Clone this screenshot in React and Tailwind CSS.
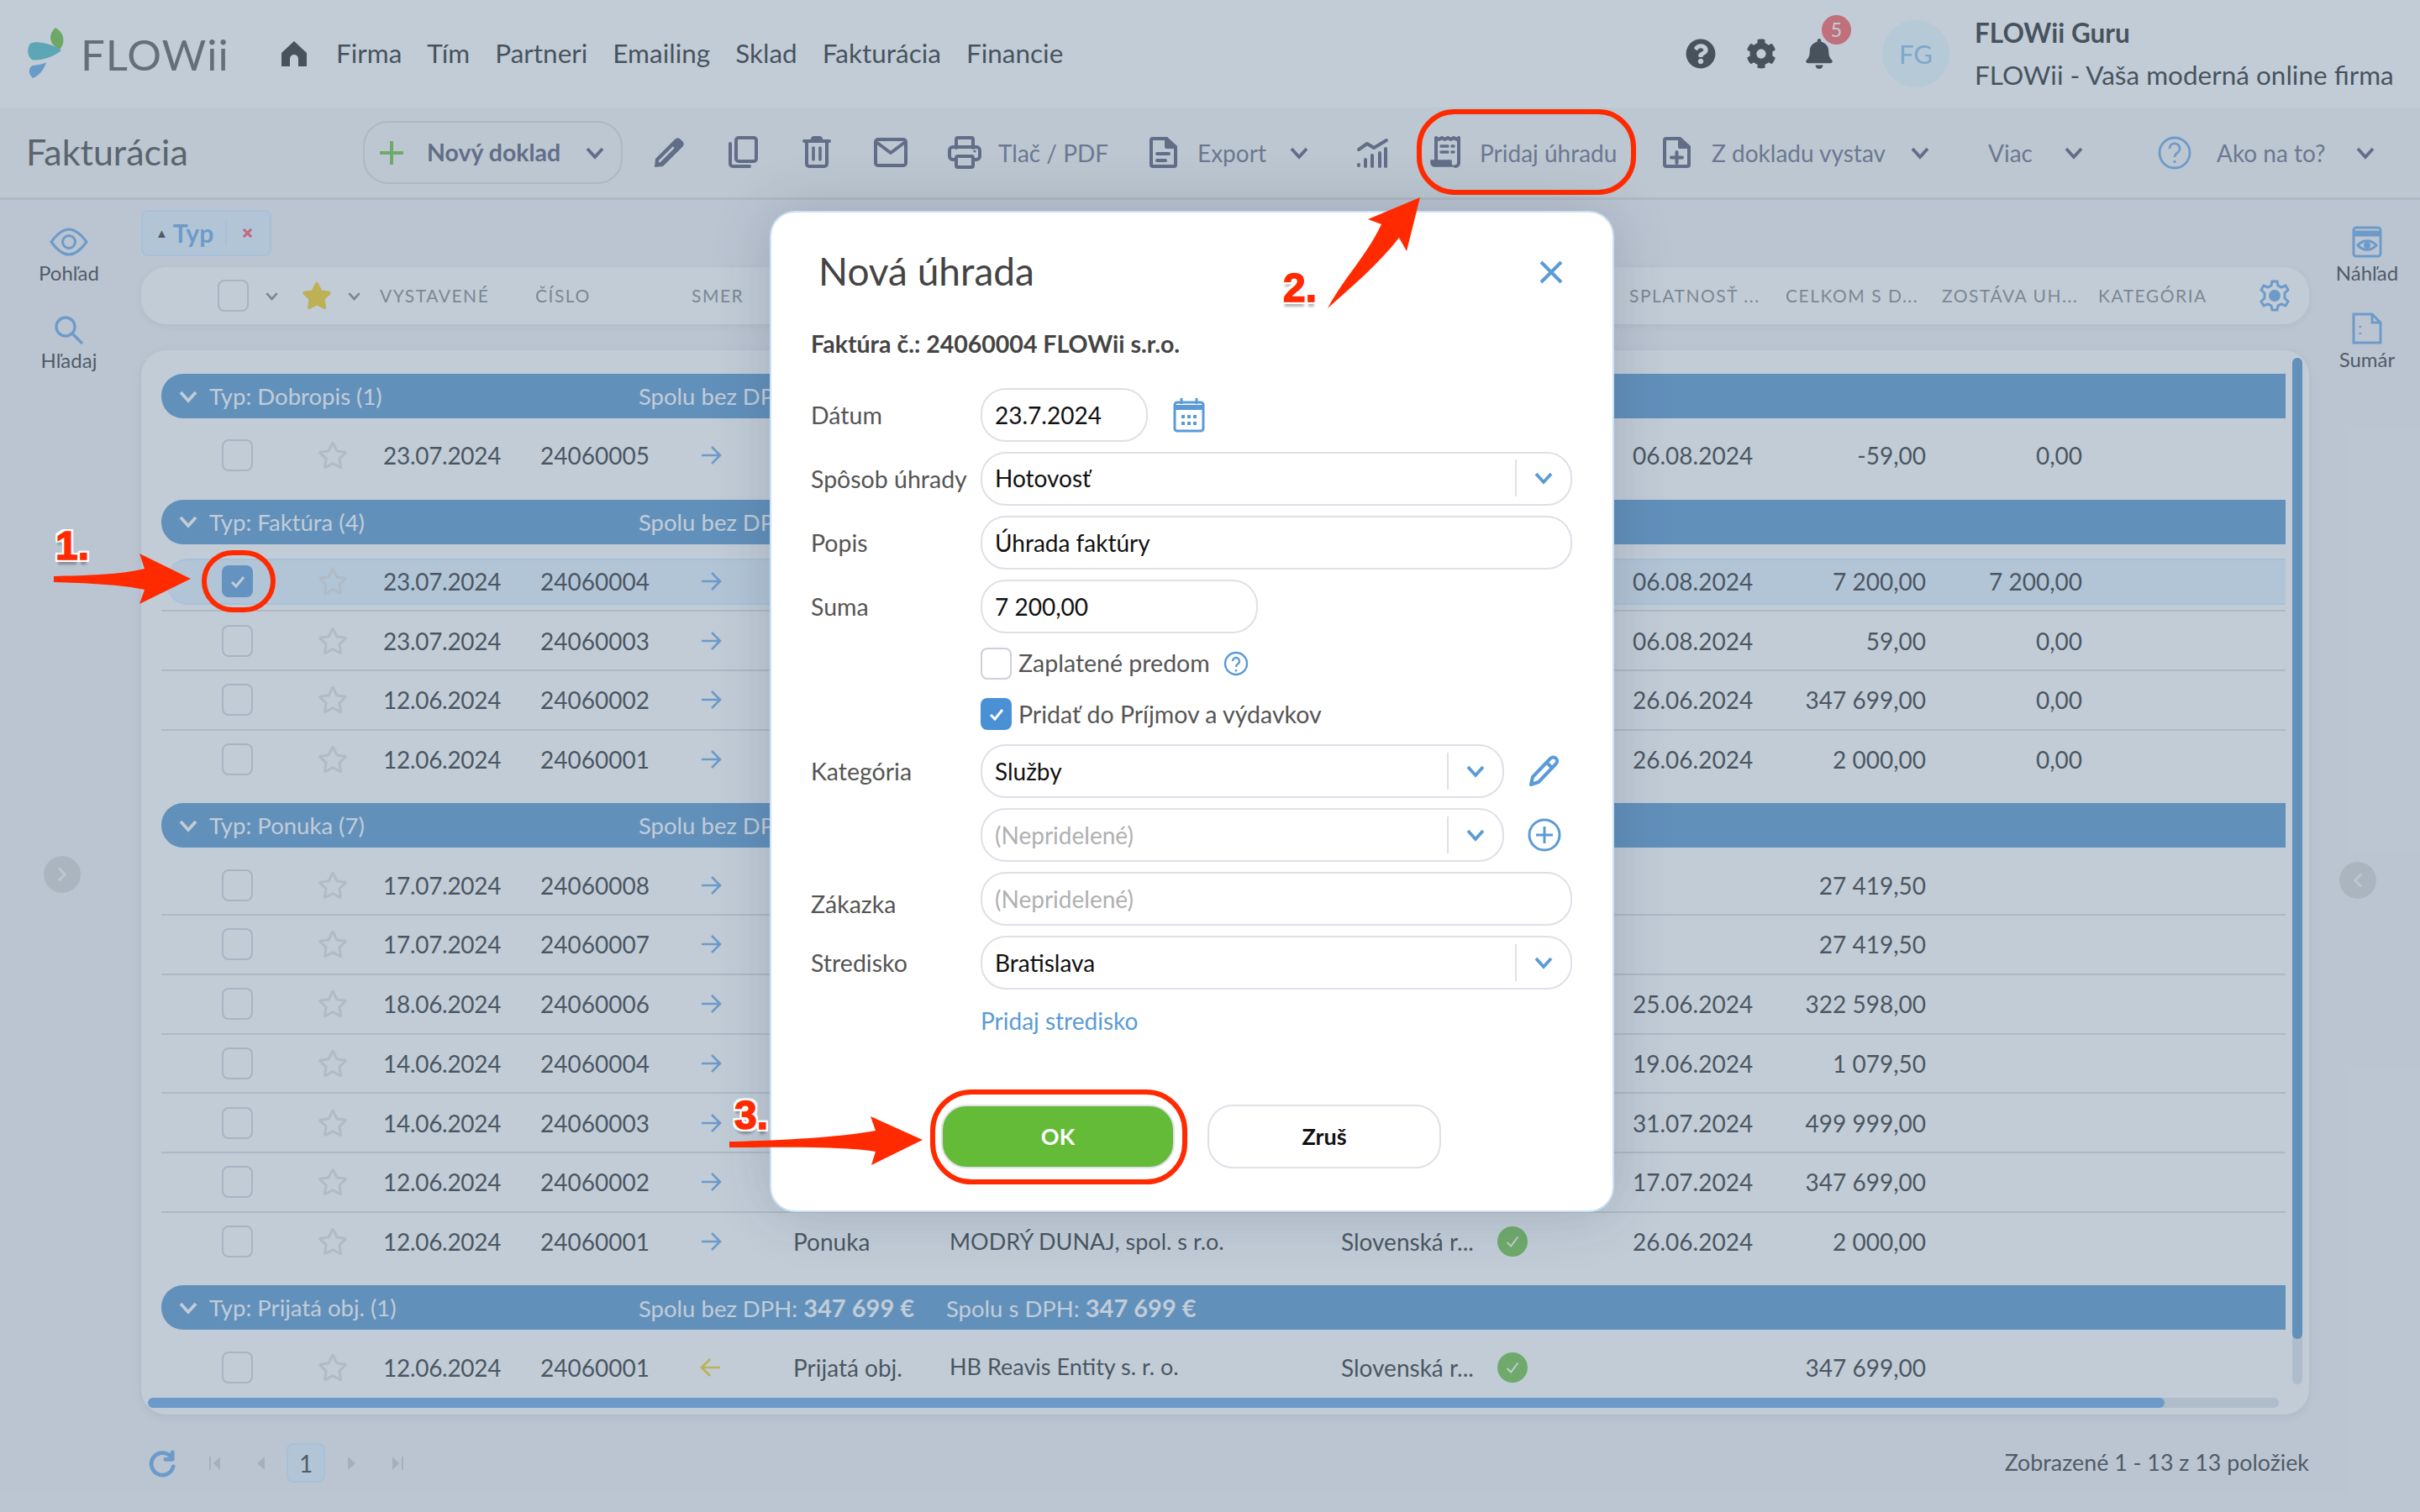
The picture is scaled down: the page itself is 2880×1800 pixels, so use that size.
import { Fragment } from "react";
import { FaQuestionCircle, FaCog, FaBell, FaStar, FaRegStar } from "react-icons/fa";

const groups = [
    {
        title: "Typ: Dobropis (1)",
        rows: [{ date: "23.07.2024", num: "24060005", due: "06.08.2024", total: "-59,00", left: "0,00" }],
    },
    {
        title: "Typ: Faktúra (4)",
        rows: [
            { date: "23.07.2024", num: "24060004", due: "06.08.2024", total: "7 200,00", left: "7 200,00", selected: true },
            { date: "23.07.2024", num: "24060003", due: "06.08.2024", total: "59,00", left: "0,00" },
            { date: "12.06.2024", num: "24060002", due: "26.06.2024", total: "347 699,00", left: "0,00" },
            { date: "12.06.2024", num: "24060001", due: "26.06.2024", total: "2 000,00", left: "0,00" },
        ],
    },
    {
        title: "Typ: Ponuka (7)",
        rows: [
            { date: "17.07.2024", num: "24060008", total: "27 419,50" },
            { date: "17.07.2024", num: "24060007", total: "27 419,50" },
            { date: "18.06.2024", num: "24060006", due: "25.06.2024", total: "322 598,00" },
            { date: "14.06.2024", num: "24060004", due: "19.06.2024", total: "1 079,50" },
            { date: "14.06.2024", num: "24060003", due: "31.07.2024", total: "499 999,00" },
            { date: "12.06.2024", num: "24060002", due: "17.07.2024", total: "347 699,00" },
            { date: "12.06.2024", num: "24060001", due: "26.06.2024", total: "2 000,00", type: "Ponuka", company: "MODRÝ DUNAJ, spol. s r.o.", state: "Slovenská r...", ok: true },
        ],
    },
    {
        title: "Typ: Prijatá obj. (1)",
        totals: true,
        rows: [
            { date: "12.06.2024", num: "24060001", total: "347 699,00", type: "Prijatá obj.", company: "HB Reavis Entity s. r. o.", state: "Slovenská r...", ok: true, incoming: true },
        ],
    },
];

function Chevron({ className }) {
    return (
        <svg viewBox="0 0 24 16" fill="none" stroke="currentColor" strokeWidth="3.8" className={className}>
            <path d="M3 3l9 10 9-10" />
        </svg>
    );
}

function ToolIcon({ children, className = "ml-0" }) {
    return (
        <svg viewBox="0 0 40 40" fill="none" stroke="currentColor" strokeWidth="4" strokeLinejoin="round" strokeLinecap="round" className={`w-[40px] h-[40px] shrink-0 text-[#454564] ${className}`}>
            {children}
        </svg>
    );
}

function ToolChevron({ className }) {
    return <Chevron className={`w-[24px] h-[16px] shrink-0 text-[#454564] ${className}`} />;
}

function Logo() {
    return (
        <svg viewBox="0 0 50 66" className="w-[50px] h-[66px] shrink-0">
            <path d="M36 2C27 10 28 22 41 28 48 20 47 8 36 2z" fill="#5ab825" />
            <path d="M6 21C12 17 30 20 43 29 32 38 16 42 8 40 2 36 2 26 6 21z" fill="#39b4be" />
            <path d="M25 43C23 52 15 60 9 62 3 56 4 49 9 47 15 46 21 46 25 43z" fill="#549fe1" />
        </svg>
    );
}

function Checkbox({ checked }) {
    if (checked) {
        return (
            <div className="w-[37px] h-[38px] rounded-[8px] bg-[#4a90d4] flex items-center justify-center shrink-0">
                <svg viewBox="0 0 24 24" fill="none" stroke="white" strokeWidth="3" className="w-[24px] h-[24px]">
                    <path d="M5 13l5 5 9-11" />
                </svg>
            </div>
        );
    }
    return <div className="w-[37px] h-[38px] rounded-[8px] border-2 border-[#cdd0da] bg-white shrink-0" />;
}

function RowArrow({ incoming }) {
    return (
        <svg viewBox="0 0 26 26" fill="none" stroke={incoming ? "#f7c800" : "#5a9fe3"} strokeWidth="2.6" className={`w-[26px] h-[26px] ${incoming ? "rotate-180" : ""}`}>
            <path d="M2 13h21M14 3l10 10-10 10" />
        </svg>
    );
}

function Row({ row, last }) {
    return (
        <div className={`h-[70.7px] flex items-center border-b-2 ${last ? "border-transparent" : "border-[#dad7dd]"}`}>
            <div
                className={`w-full ml-[6px] h-[55px] pl-[66px] rounded-l-[26px] grid grid-cols-[114px_78px_187px_190px_111px_186px_466px_186px_161px_157px_192px_186px_1fr] items-center text-[28px] text-[#161616] border-y-2 ${
                    row.selected ? "bg-[#e1f1ff] border-[#cde7ff]" : "border-transparent"
                }`}
            >
                <Checkbox checked={row.selected} />
                <FaRegStar className="w-[36px] h-[34px] text-[#dddddd]" />
                <div className="tracking-[-0.3px]">{row.date}</div>
                <div>{row.num}</div>
                <RowArrow incoming={row.incoming} />
                <div>{row.type}</div>
                <div className="text-[27px]">{row.company}</div>
                <div>{row.state}</div>
                <div>
                    {row.ok && (
                        <div className="w-[36px] h-[36px] rounded-full bg-[#5ebc2d] flex items-center justify-center">
                            <svg viewBox="0 0 24 24" fill="none" stroke="white" strokeWidth="2.2" className="w-[22px] h-[22px]">
                                <path d="M5 13l5 5 9-12" />
                            </svg>
                        </div>
                    )}
                </div>
                <div>{row.due}</div>
                <div className="text-right">{row.total}</div>
                <div className="text-right">{row.left}</div>
            </div>
        </div>
    );
}

function Group({ group }) {
    return (
        <div className="mb-[16px]">
            <div className="h-[53px] rounded-l-[26px] bg-[#4389c8] text-white text-[27.5px] flex items-center pl-[20px]">
                <Chevron className="w-[24px] h-[16px]" />
                <div className="ml-[13px] w-[511px]">{group.title}</div>
                <div className="w-[366px] whitespace-nowrap">
                    Spolu bez DPH{group.totals ? ": " : ""}
                    {group.totals && <b className="text-[29px]">347 699 €</b>}
                </div>
                {group.totals && (
                    <div>
                        Spolu s DPH: <b className="text-[29px]">347 699 €</b>
                    </div>
                )}
            </div>
            <div className="mt-[10px]">
                {group.rows.map((row, i) => (
                    <Row key={i} row={row} last={i === group.rows.length - 1} />
                ))}
            </div>
        </div>
    );
}

function Field({ label, children, labelClass = "" }) {
    return (
        <div className="flex items-center h-[64px]">
            <div className={`w-[202px] shrink-0 text-[28.5px] text-[#555555] ${labelClass}`}>{label}</div>
            {children}
        </div>
    );
}

function Box({ children, className = "", arrow, muted }) {
    return (
        <div className={`h-[64px] rounded-[30px] border-2 border-[#dfe0e8] bg-white flex items-center pl-[15px] text-[28px] ${muted ? "text-[#b0b0b0]" : "text-[#111111]"} ${className}`}>
            <div className="flex-1">{children}</div>
            {arrow && (
                <Fragment>
                    <div className="w-[2px] h-[44px] bg-[#dfe0e8]" />
                    <Chevron className="w-[24px] h-[16px] mx-[20px] text-[#5b9bd5]" />
                </Fragment>
            )}
        </div>
    );
}

function Modal() {
    return (
        <div className="absolute left-[916px] top-[251px] w-[1005px] h-[1192px] rounded-[30px] bg-white border-2 border-[#c8e0f5] shadow-[0_0_70px_rgba(40,50,70,0.2)] pl-[47px] pt-[37px] [font-family:Lato,sans-serif]">
            <div className="flex items-center justify-between h-[64px] pl-[9px] pr-[58px]">
                <div className="text-[46px] text-[#444444]">Nová úhrada</div>
                <svg viewBox="0 0 30 30" fill="none" stroke="#5b9bd5" strokeWidth="4" className="w-[30px] h-[30px] mt-[3px]">
                    <path d="M3 3l24 24M27 3L3 27" />
                </svg>
            </div>
            <div className="h-[40px] mt-[35px] flex items-center text-[28.5px] font-bold text-[#444444]">Faktúra č.: 24060004 FLOWii s.r.o.</div>

            <div className="mt-[33px] w-[906px] flex flex-col gap-[12px]">
                <Field label="Dátum">
                    <Box className="w-[199px]">23.7.2024</Box>
                    <svg viewBox="0 0 38 42" className="w-[38px] h-[42px] ml-[30px]" fill="none" stroke="#5b9bd5" strokeWidth="3">
                        <rect x="2" y="6" width="34" height="34" rx="3" />
                        <path d="M2 12h34" strokeWidth="6" />
                        <path d="M10 1v7M28 1v7" />
                        <path d="M10 23h4M17 23h4M24 23h4M10 31h4M17 31h4M24 31h4" strokeWidth="4" />
                    </svg>
                </Field>
                <Field label="Spôsob úhrady">
                    <Box className="flex-1 pb-[3px]" arrow>Hotovosť</Box>
                </Field>
                <Field label="Popis">
                    <Box className="flex-1">Úhrada faktúry</Box>
                </Field>
                <Field label="Suma">
                    <Box className="w-[330px]">7 200,00</Box>
                </Field>
            </div>

            <div className="flex items-center h-[37px] mt-[17px] ml-[202px] text-[28.5px] text-[#555555]">
                <Checkbox />
                <div className="ml-[8px]">Zaplatené predom</div>
                <svg viewBox="0 0 30 30" fill="none" stroke="#5b9bd5" strokeWidth="2.4" className="w-[30px] h-[30px] ml-[16px]">
                    <circle cx="15" cy="15" r="13" />
                    <path d="M11 12a4 4 0 1 1 6 3.5c-1.5 1-2 1.5-2 3.5M15 22v2.5" />
                </svg>
            </div>
            <div className="flex items-center h-[38px] mt-[23px] ml-[202px] text-[28.5px] text-[#555555]">
                <Checkbox checked />
                <div className="ml-[8px]">Pridať do Príjmov a výdavkov</div>
            </div>

            <div className="mt-[17px] w-[906px] flex flex-col gap-[12px]">
                <Field label="Kategória">
                    <Box className="w-[623px]" arrow>Služby</Box>
                    <svg viewBox="0 0 40 40" fill="none" stroke="#5b9bd5" strokeWidth="4" strokeLinejoin="round" className="w-[40px] h-[40px] ml-[28px]">
                        <path d="M4 36l2-9L27 5a3.5 3.5 0 0 1 7 6L13 33zM23 10l6 6" />
                    </svg>
                </Field>
                <Field label="">
                    <Box className="w-[623px]" arrow muted>(Nepridelené)</Box>
                    <svg viewBox="0 0 40 40" fill="none" stroke="#5b9bd5" strokeWidth="3" className="w-[40px] h-[40px] ml-[28px]">
                        <circle cx="20" cy="20" r="18" />
                        <path d="M20 10v20M10 20h20" />
                    </svg>
                </Field>
                <Field label="Zákazka" labelClass="pt-[12px]">
                    <Box className="flex-1" muted>(Nepridelené)</Box>
                </Field>
                <Field label="Stredisko">
                    <Box className="flex-1" arrow>Bratislava</Box>
                </Field>
            </div>

            <div className="h-[40px] mt-[17px] ml-[202px] flex items-center text-[28px] text-[#5b9bd5]">Pridaj stredisko</div>

            <div className="flex gap-[39px] mt-[80px] ml-[155px]">
                <div className="w-[278px] h-[76px] rounded-[30px] bg-[#63bb38] border-2 border-[#dfe0e8] flex items-center justify-center text-[27px] font-bold text-white">OK</div>
                <div className="w-[278px] h-[76px] rounded-[30px] bg-white border-2 border-[#dfe0e8] flex items-center justify-center text-[27px] font-bold text-[#111111]">Zruš</div>
            </div>
        </div>
    );
}

function Annotations() {
    const numberClass =
        "absolute text-[48px] leading-none font-bold text-[#ff2a00] [font-family:'Liberation_Sans',sans-serif] [-webkit-text-stroke:1.5px_#ff2a00] [text-shadow:3px_0_0_white,-3px_0_0_white,0_3px_0_white,0_-3px_0_white,3px_3px_0_white,-3px_3px_0_white,3px_-3px_0_white,-3px_-3px_0_white,0_6px_3px_rgba(0,0,0,0.3)]";
    return (
        <Fragment>
            <svg viewBox="0 0 2880 1800" className="absolute inset-0 w-[2880px] h-[1800px]" fill="none">
                <g stroke="#ff2a00" strokeWidth="6">
                    <rect x="1689" y="133" width="255" height="96" rx="42" />
                    <rect x="243" y="658" width="82" height="68" rx="34" />
                    <rect x="1110" y="1300" width="300" height="107" rx="46" />
                </g>
                <g fill="#ff2a00">
                    <path d="M64 686C100 685 146 684 172 677L166 659 227 689 166 719 172 702C146 696 100 694 64 693z" />
                    <path d="M868 1359C920 1358 1000 1354 1042 1346L1036 1329 1098 1357 1037 1387 1042 1371C1000 1364 920 1366 868 1366z" />
                    <path d="M1690 235L1628 261 1644 267C1626 305 1600 330 1580 367 1610 340 1640 315 1665 283L1674 299z" />
                </g>
            </svg>
            <div className={`${numberClass} left-[66px] top-[626px]`}>1.</div>
            <div className={`${numberClass} left-[1527px] top-[319px]`}>2.</div>
            <div className={`${numberClass} left-[874px] top-[1304px]`}>3.</div>
        </Fragment>
    );
}

export default function App() {
    return (
        <div className="relative w-[2880px] h-[1800px] overflow-hidden bg-[#f4f1f5] text-[#111111] [font-family:Lato,sans-serif]">
            {/* Top bar */}
            <div className="h-[128px] bg-white flex items-center pl-[30px]">
                <Logo />
                <div className="ml-[16px] w-[176px] text-[51px] tracking-[1px] text-[#4a4a4a] leading-none">FLOWii</div>
                <svg viewBox="0 0 30 30" fill="#111111" className="ml-[63px] w-[30px] h-[30px]">
                    <path d="M15 0L30 14V30H20V21a5 5 0 0 0-10 0V30H0V14z" />
                </svg>
                <nav className="ml-[35px] flex gap-[30px] text-[31.5px]">
                    <span>Firma</span>
                    <span>Tím</span>
                    <span>Partneri</span>
                    <span>Emailing</span>
                    <span>Sklad</span>
                    <span>Fakturácia</span>
                    <span>Financie</span>
                </nav>
                <div className="ml-auto flex items-center">
                    <FaQuestionCircle className="w-[36px] h-[36px] text-[#111111]" />
                    <FaCog className="ml-[36px] w-[36px] h-[36px] text-[#111111]" />
                    <div className="relative ml-[34px]">
                        <FaBell className="w-[34px] h-[36px] text-[#111111]" />
                        <div className="absolute left-[20px] top-[-28px] w-[35px] h-[35px] rounded-full bg-[#fd4b49] text-white text-[23px] flex items-center justify-center">5</div>
                    </div>
                    <div className="ml-[58px] w-[80px] h-[80px] rounded-full bg-[#e9f9ff] text-[#7db6e9] text-[31px] flex items-center justify-center">FG</div>
                    <div className="ml-[30px] w-[530px] text-[31.5px] flex flex-col gap-[14px] leading-[36px]">
                        <b>FLOWii Guru</b>
                        <span>FLOWii - Vaša moderná online firma</span>
                    </div>
                </div>
            </div>

            {/* Toolbar */}
            <div className="h-[110px] bg-[#f5f5f3] border-b-[3px] border-[#dcdcdc] flex items-center pl-[31px] text-[28px] text-[#585a74]">
                <div className="w-[401px] text-[43px] text-[#353331]">Fakturácia</div>
                <div className="w-[309px] h-[75px] rounded-[30px] border-2 border-[#d5d8e0] flex items-center pl-[17px]">
                    <svg viewBox="0 0 30 30" stroke="#5ebc2d" strokeWidth="4" className="w-[30px] h-[30px]">
                        <path d="M15 1v28M1 15h28" />
                    </svg>
                    <b className="ml-[27px] w-[170px] text-[28.5px] text-[#454564] whitespace-nowrap">Nový doklad</b>
                    <ToolChevron className="ml-[18px]" />
                </div>
                <ToolIcon className="ml-[36px]">
                    <path d="M2 37L3 27 26 4Q29 1 32 3L36 7Q38 10 35 13L12 36z" fill="currentColor" stroke="none" />
                    <path d="M8 30L24 14" stroke="#f5f5f3" strokeWidth="2.6" />
                </ToolIcon>
                <ToolIcon className="ml-[47px]">
                    <rect x="12" y="2" width="24" height="28" rx="3" />
                    <path d="M5 9V33a3 3 0 0 0 3 3H28" />
                </ToolIcon>
                <ToolIcon className="ml-[48px]">
                    <path d="M8 7V33a3 3 0 0 0 3 3H29a3 3 0 0 0 3-3V7" />
                    <path d="M5 6H35M15 4Q15 2 17 2H23Q25 2 25 4" />
                    <path d="M16 14V28M24 14V28" strokeWidth="3.6" />
                </ToolIcon>
                <ToolIcon className="ml-[48px]">
                    <rect x="2" y="4" width="36" height="31" rx="3" />
                    <path d="M4 8L20 20 36 8" />
                </ToolIcon>
                <ToolIcon className="ml-[48px]">
                    <path d="M10 14V4a2 2 0 0 1 2-2H28a2 2 0 0 1 2 2V14" />
                    <path d="M10 28H6a4 4 0 0 1-4-4V17a4 4 0 0 1 4-4H34a4 4 0 0 1 4 4V24a4 4 0 0 1-4 4H30" />
                    <rect x="10" y="24" width="20" height="13" rx="2" />
                    <circle cx="32" cy="18" r="1.6" fill="currentColor" stroke="none" />
                </ToolIcon>
                <div className="ml-[20px] w-[125px] whitespace-nowrap">Tlač / PDF</div>
                <ToolIcon className="ml-[51px]">
                    <path d="M6 5a2 2 0 0 1 2-2H24L35 13V34a2 2 0 0 1-2 2H8a2 2 0 0 1-2-2z" />
                    <path d="M24 3V13H35z" fill="currentColor" />
                    <path d="M13 21H27M13 29H23" />
                </ToolIcon>
                <div className="ml-[21px] w-[80px]">Export</div>
                <ToolChevron className="ml-[29px]" />
                <ToolIcon className="ml-[56px]">
                    <path d="M3 16L13 9 21 14 36 5" />
                    <path d="M3 34V35M11 28V36M19 23V36M28 20V36M35 15V36" />
                </ToolIcon>
                <ToolIcon className="ml-[46px]">
                    <path d="M9 28V2L12.5 4 16 2 19.5 4 23 2 26.5 4 30 2 33.5 4 36 2V32a4 4 0 0 1-4 4" />
                    <path d="M3 29H27V32a4 4 0 0 0 4 4H7a4 4 0 0 1-4-4z" fill="currentColor" strokeWidth="1.5" />
                    <path d="M15 12H23M28 12H30M15 19H23M28 19H30" strokeWidth="3.4" />
                </ToolIcon>
                <div className="ml-[21px] w-[162px] whitespace-nowrap">Pridaj úhradu</div>
                <ToolIcon className="ml-[52px]">
                    <path d="M6 5a2 2 0 0 1 2-2H24L35 13V34a2 2 0 0 1-2 2H8a2 2 0 0 1-2-2z" />
                    <path d="M24 3V13H35z" fill="currentColor" />
                    <path d="M20.5 19V32M14 25.5H27" />
                </ToolIcon>
                <div className="ml-[22px] w-[206px] whitespace-nowrap">Z dokladu vystav</div>
                <ToolChevron className="ml-[30px]" />
                <div className="ml-[69px] w-[54px]">Viac</div>
                <ToolChevron className="ml-[36px]" />
                <svg viewBox="0 0 40 40" fill="none" stroke="#5a9fe3" strokeWidth="2.8" className="ml-[88px] w-[40px] h-[40px] shrink-0">
                    <circle cx="20" cy="20" r="18" />
                    <path d="M14 15a6 6 0 1 1 9 5c-2 1.5-3 2.5-3 5M20 29v3" />
                </svg>
                <div className="ml-[30px] w-[129px] whitespace-nowrap">Ako na to?</div>
                <ToolChevron className="ml-[36px]" />
            </div>

            <div className="flex">
                {/* Left rail */}
                <div className="w-[168px] shrink-0 flex flex-col items-center text-[24px] text-[#222222] pt-[33px] pr-[4px]">
                    <svg viewBox="0 0 46 34" fill="none" stroke="#5a9fe3" strokeWidth="3" className="w-[46px] h-[34px]">
                        <path d="M2 17C10 6 16 2 23 2s13 4 21 15c-8 11-14 15-21 15S10 28 2 17z" />
                        <circle cx="23" cy="17" r="7.5" />
                    </svg>
                    <div className="mt-[2px]">Pohľad</div>
                    <svg viewBox="0 0 36 36" fill="none" stroke="#5a9fe3" strokeWidth="3.4" className="w-[36px] h-[36px] mt-[32px]">
                        <circle cx="14" cy="14" r="11" />
                        <path d="M22 22l12 12" />
                    </svg>
                    <div>Hľadaj</div>
                    <div className="w-[44px] h-[44px] mt-[572px] mr-[17px] rounded-full bg-[#d4d2d0] flex items-center justify-center">
                        <svg viewBox="0 0 16 24" fill="none" stroke="#f5f5f5" strokeWidth="3.6" className="w-[14px] h-[20px]">
                            <path d="M3 3l9 9-9 9" />
                        </svg>
                    </div>
                </div>

                {/* Main column */}
                <div className="w-[2580px] shrink-0">
                    <div className="mt-[12px] w-[155px] h-[55px] rounded-[8px] bg-[#e1f1ff] border-2 border-[#cde7ff] flex items-center pl-[15px]">
                        <span className="text-[15px] text-[#222222]">▲</span>
                        <b className="ml-[6px] text-[30px] text-[#5a9fe3]">Typ</b>
                        <div className="ml-[14px] w-[2px] h-[30px] bg-[#cde7ff]" />
                        <svg viewBox="0 0 14 14" stroke="#ff4060" strokeWidth="3.4" className="ml-[18px] w-[13px] h-[13px]">
                            <path d="M2 2l10 10M12 2L2 12" />
                        </svg>
                    </div>

                    <div className="mt-[13px] h-[68px] rounded-[30px] bg-white shadow-[0_2px_10px_rgba(60,70,90,0.12)] flex items-center pl-[91px] text-[21px] tracking-[1.5px] text-[#787878]">
                        <Checkbox />
                        <Chevron className="ml-[19px] w-[17px] h-[11px] text-[#787878]" />
                        <FaStar className="ml-[27px] w-[36px] h-[34px] text-[#f7c800]" />
                        <Chevron className="ml-[18px] w-[17px] h-[11px] text-[#787878]" />
                        <div className="ml-[22px] w-[185px]">VYSTAVENÉ</div>
                        <div className="w-[186px]">ČÍSLO</div>
                        <div className="w-[1116px]">SMER</div>
                        <div className="w-[186px] whitespace-nowrap">SPLATNOSŤ ...</div>
                        <div className="w-[186px] whitespace-nowrap">CELKOM S D...</div>
                        <div className="w-[186px] whitespace-nowrap">ZOSTÁVA UH...</div>
                        <div className="w-[186px]">KATEGÓRIA</div>
                        <svg viewBox="0 0 40 40" fill="none" stroke="#5a9fe3" strokeWidth="3" className="w-[40px] h-[40px] ml-[4px]">
                            <path d="M17 3h6l1 5 4 2 5-2 3 5-4 4v6l4 4-3 5-5-2-4 2-1 5h-6l-1-5-4-2-5 2-3-5 4-4v-6L4 13l3-5 5 2 4-2z" />
                            <circle cx="20" cy="20" r="5.5" fill="#5a9fe3" />
                        </svg>
                    </div>

                    {/* Table panel */}
                    <div className="relative mt-[31px] w-[2580px] h-[1267px] rounded-[30px] bg-white shadow-[0_3px_12px_rgba(60,70,90,0.15)] pt-[28px]">
                        <div className="h-[1219px] ml-[24px] w-[2528px]">
                            {groups.map((g) => (
                                <Group key={g.title} group={g} />
                            ))}
                        </div>
                        <div className="ml-[8px] w-[2536px] h-[12px] rounded-full bg-[#dcdfe8]">
                            <div className="w-[2400px] h-[12px] rounded-full bg-[#5a9fe3]" />
                        </div>
                        <div className="absolute right-[8px] top-[9px] w-[12px] h-[1222px] rounded-full bg-[#dcdfe8]">
                            <div className="w-[12px] h-[1168px] rounded-full bg-[#4389c8]" />
                        </div>
                    </div>

                    {/* Pagination */}
                    <div className="mt-[34px] h-[47px] flex items-center">
                        <svg viewBox="0 0 36 36" fill="none" stroke="#5a9fe3" strokeWidth="5" strokeLinecap="round" strokeLinejoin="round" className="ml-[8px] w-[34px] h-[34px]">
                            <path d="M30 11A14 14 0 1 0 32 22" />
                            <path d="M31 4V13H22" />
                        </svg>
                        <svg viewBox="0 0 14 16" fill="#c8c8c8" className="ml-[39px] w-[14px] h-[16px]">
                            <path d="M0 0h2v16H0zM13 0v16L5 8z" />
                        </svg>
                        <svg viewBox="0 0 9 16" fill="#c8c8c8" className="ml-[43px] w-[9px] h-[16px]">
                            <path d="M9 0v16L0 8z" />
                        </svg>
                        <div className="ml-[26px] w-[46px] h-[47px] rounded-[8px] bg-[#e1f1ff] border-2 border-[#cde7ff] flex items-center justify-center text-[28px] text-[#222222]">1</div>
                        <svg viewBox="0 0 9 16" fill="#c8c8c8" className="ml-[27px] w-[9px] h-[16px]">
                            <path d="M0 0v16L9 8z" />
                        </svg>
                        <svg viewBox="0 0 14 16" fill="#c8c8c8" className="ml-[43px] w-[14px] h-[16px]">
                            <path d="M12 0h2v16h-2zM1 0v16L9 8z" />
                        </svg>
                        <div className="ml-auto text-[26.8px] text-[#222222]">Zobrazené 1 - 13 z 13 položiek</div>
                    </div>
                </div>

                {/* Right rail */}
                <div className="flex-1 flex flex-col items-center text-[24px] text-[#222222] pt-[31px] pl-[6px]">
                    <svg viewBox="0 0 36 38" fill="none" stroke="#5a9fe3" strokeWidth="3" className="w-[36px] h-[38px]">
                        <rect x="2" y="2" width="32" height="34" rx="3" />
                        <path d="M2 9h32" strokeWidth="7" />
                        <path d="M7 23c6-7 16-7 22 0-6 7-16 7-22 0z" />
                        <circle cx="18" cy="23" r="2.5" fill="#5a9fe3" />
                    </svg>
                    <div>Náhľad</div>
                    <svg viewBox="0 0 36 38" fill="none" stroke="#5a9fe3" strokeWidth="3" className="w-[36px] h-[38px] mt-[29px]">
                        <path d="M2 2h22l10 10v24H2z" />
                        <path d="M10 16v2M10 24v2M24 2v10h10" />
                    </svg>
                    <div>Sumár</div>
                    <div className="w-[44px] h-[44px] mt-[580px] -ml-[22px] rounded-full bg-[#d4d2d0] flex items-center justify-center">
                        <svg viewBox="0 0 16 24" fill="none" stroke="#f5f5f5" strokeWidth="3.6" className="w-[14px] h-[20px]">
                            <path d="M13 3l-9 9 9 9" />
                        </svg>
                    </div>
                </div>
            </div>

            {/* Dim layer behind the dialog */}
            <div className="absolute inset-0 bg-[rgba(129,151,173,0.49)]" />
            <Modal />
            <Annotations />
        </div>
    );
}
